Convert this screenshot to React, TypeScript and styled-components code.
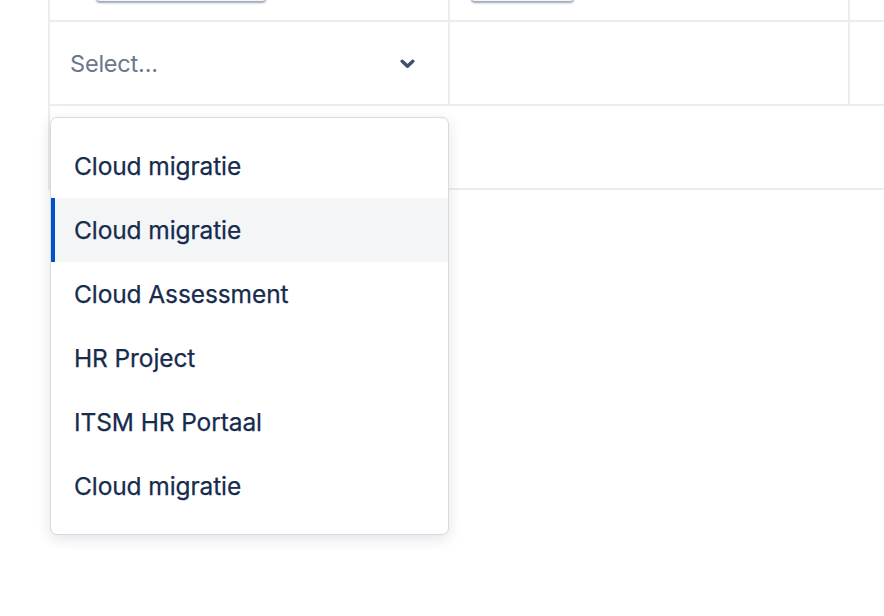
import React from "react";
import styled, { createGlobalStyle } from "styled-components";

const Global = createGlobalStyle`
  html, body {
    margin: 0;
    padding: 0;
    background: #ffffff;
    overflow: hidden;
    font-family: Inter, "Noto Sans", "Liberation Sans", sans-serif;
  }
`;

const Page = styled.div`
  width: 884px;
  height: 616px;
  overflow: hidden;
  padding-left: 48px;
  box-sizing: border-box;
`;

const Table = styled.div`
  width: 1000px;
  margin-top: -40px;
  border-left: 2px solid #ebecf0;
`;

const Row = styled.div<{ $height: number }>`
  display: flex;
  height: ${(p) => p.$height}px;
  border-bottom: 2px solid #ebecf0;
`;

const Cell = styled.div<{ $width?: number }>`
  position: relative;
  display: flex;
  align-items: center;
  box-sizing: border-box;
  width: ${(p) => (p.$width ? `${p.$width}px` : "auto")};
  flex: ${(p) => (p.$width ? "none" : "1")};
  border-right: 2px solid #ebecf0;
  &:last-child {
    border-right: none;
  }
`;

const TopCell = styled(Cell)`
  align-items: flex-start;
`;

const Chip = styled.div<{ $left: number; $width: number }>`
  margin-left: ${(p) => p.$left}px;
  margin-top: 8px;
  width: ${(p) => p.$width}px;
  height: 33px;
  border-radius: 4px;
  background: #f4f5f7;
  box-shadow: 0 2px 2px rgba(80, 95, 121, 0.55);
`;

const SelectControl = styled.div`
  display: flex;
  align-items: center;
  justify-content: space-between;
  width: 100%;
  padding: 0 33px 0 20px;
  box-sizing: border-box;
`;

const Placeholder = styled.span`
  font-size: 23.5px;
  color: #6b778c;
  letter-spacing: -0.2px;
`;

const Chevron = styled.svg`
  width: 15px;
  height: 10px;
  margin-top: 1px;
  color: #42526e;
`;

const Menu = styled.ul`
  position: absolute;
  top: calc(100% + 13px);
  left: 0;
  width: 399px;
  margin: 0;
  padding: 16px 0;
  list-style: none;
  box-sizing: border-box;
  background: #ffffff;
  border: 1px solid #d9dadd;
  border-radius: 7px;
  box-shadow: 0 4px 14px rgba(9, 30, 66, 0.12);
  z-index: 10;
`;

const Option = styled.li<{ $active?: boolean }>`
  display: flex;
  align-items: center;
  height: 64px;
  padding-left: 23px;
  font-size: 24.5px;
  color: #172b4d;
  letter-spacing: -0.1px;
  -webkit-text-stroke: 0.25px #172b4d;
  background: ${(p) => (p.$active ? "#f4f5f7" : "transparent")};
  box-shadow: ${(p) => (p.$active ? "inset 4px 0 0 #0052cc" : "none")};
`;

const options = [
  "Cloud migratie",
  "Cloud migratie",
  "Cloud Assessment",
  "HR Project",
  "ITSM HR Portaal",
  "Cloud migratie",
];

export default function App() {
  return (
    <>
      <Global />
      <Page>
        <Table>
          <Row $height={60}>
            <TopCell $width={400}>
              <Chip $left={46} $width={170} />
            </TopCell>
            <TopCell $width={400}>
              <Chip $left={21} $width={103} />
            </TopCell>
            <Cell />
          </Row>
          <Row $height={82}>
            <Cell $width={400}>
              <SelectControl>
                <Placeholder>Select...</Placeholder>
                <Chevron viewBox="0 0 15 10">
                  <path
                    d="M2.2 2.2 L7.5 7.3 L12.8 2.2"
                    fill="none"
                    stroke="currentColor"
                    strokeWidth="3.4"
                    strokeLinecap="round"
                    strokeLinejoin="round"
                  />
                </Chevron>
              </SelectControl>
              <Menu>
                {options.map((o, i) => (
                  <Option key={i} $active={i === 1}>
                    {o}
                  </Option>
                ))}
              </Menu>
            </Cell>
            <Cell $width={400} />
            <Cell />
          </Row>
          <Row $height={82}>
            <Cell />
          </Row>
        </Table>
      </Page>
    </>
  );
}
